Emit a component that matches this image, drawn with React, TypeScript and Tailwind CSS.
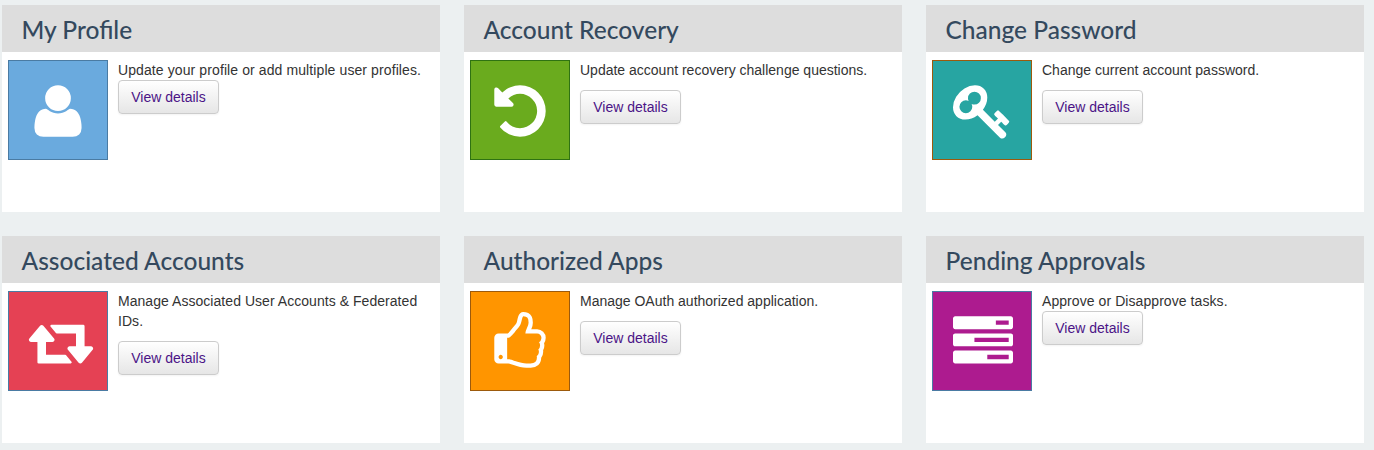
import type { ReactNode } from 'react';

type Card = {
  title: string;
  text: string;
  tracking: string;
  tile: string;
  button: string;
  shift: string;
  icon: ReactNode;
};

const cards: Card[] = [
  {
    title: 'My Profile',
    text: 'Update your profile or add multiple user profiles.',
    tracking: 'tracking-[0.1px]',
    tile: 'bg-[#6aaade] border-[#4a7ba3]',
    button: 'mt-0',
    shift: 'pl-0',
    icon: (
      <path
        transform="translate(192 1536) scale(1 -1)"
        d="M1408 131q0 -120 -73 -189.5t-194 -69.5h-874q-121 0 -194 69.5t-73 189.5q0 53 3.5 103.5t14 109t26.5 108.5t43 97.5t62 81t85.5 53.5t111.5 20q9 0 42 -21.5t74.5 -48t108 -48t133.5 -21.5t133.5 21.5t108 48t74.5 48t42 21.5q61 0 111.5 -20t85.5 -53.5t62 -81t43 -97.5t26.5 -108.5t14 -109t3.5 -103.5zM1088 1024q0 -159 -112.5 -271.5t-271.5 -112.5t-271.5 112.5t-112.5 271.5t112.5 271.5t271.5 112.5t271.5 -112.5t112.5 -271.5z"
      />
    ),
  },
  {
    title: 'Account Recovery',
    text: 'Update account recovery challenge questions.',
    tracking: 'tracking-normal',
    tile: 'bg-[#6aab1e] border-[#2f7312]',
    button: 'mt-2.5',
    shift: 'pl-0',
    icon: (
      <path d="M1664 896q0 156-61 298t-164 245-245 164-298 61q-172 0-327-72.5t-264-204.5q-7-10-6.5-22.5t8.5-20.5l137-138q10-9 25-9 16 2 23 12 73 95 179 147t225 52q104 0 198.5-40.5t163.5-109.5 109.5-163.5 40.5-198.5-40.5-198.5-109.5-163.5-163.5-109.5-198.5-40.5q-98 0-188 35.5t-160 101.5l137 138q31 30 14 69-17 40-59 40h-448q-26 0-45-19t-19-45v-448q0-42 40-59 39-17 69 14l130 129q107-101 244.5-156.5t284.5-55.5q156 0 298 61t245 164 164 245 61 298z" />
    ),
  },
  {
    title: 'Change Password',
    text: 'Change current account password.',
    tracking: 'tracking-normal',
    tile: 'bg-[#27a5a2] border-[#9c5a0c]',
    button: 'mt-2.5',
    shift: 'pl-0.5',
    icon: (
      <path d="M832 512q0-80-56-136t-136-56-136 56-56 136q0 42 19 83-41-19-83-19-80 0-136 56t-56 136 56 136 136 56 136-56 56-136q0-42-19-83 41 19 83 19 80 0 136-56t56-136zm851 704q0 17-49 66t-66 49q-9 0-28.5-16t-36.5-33-38.5-40-24.5-26l-96 96 220 220q28 28 28 68 0 42-39 81t-81 39q-40 0-68-28l-671-671q-176 131-365 131-163 0-265.5-102.5t-102.5-265.5q0-160 95-313t248-248 313-95q163 0 265.5 102.5t102.5 265.5q0 189-131 365l355 355 96-96q-3-3-26-24.5t-40-38.5-33-36.5-16-28.5q0-17 49-66t66-49q13 0 23 10 6 6 46 44.5t82 79.5 86.5 86 73 78 28.5 41z" />
    ),
  },
  {
    title: 'Associated Accounts',
    text: 'Manage Associated User Accounts & Federated IDs.',
    tracking: 'tracking-[0.045px]',
    tile: 'bg-[#e54154] border-[#4a7ba3]',
    button: 'mt-2.5',
    shift: 'pl-1.5',
    icon: (
      <path d="M1216 1504q0 13-9.5 22.5t-22.5 9.5h-960q-8 0-13.5-2t-9-7-5.5-8-3-11.5-1-11.5v-600h-192q-26 0-45-19t-19-45q0-24 15-41l320-384q19-22 49-22t49 22l320 384q15 17 15 41 0 26-19 45t-45 19h-192v384h576q16 0 25 11l160 192q7 10 7 21zm640-416q0 24-15 41l-320 384q-20 23-49 23t-49-23l-320-384q-15-17-15-41 0-26 19-45t45-19h192v-384h-576q-16 0-25-12l-160-192q-7-9-7-20 0-13 9.5-22.5t22.5-9.5h960q8 0 13.5 2t9 7 5.5 8 3 11.5 1 11.5v600h192q26 0 45 19t19 45z" />
    ),
  },
  {
    title: 'Authorized Apps',
    text: 'Manage OAuth authorized application.',
    tracking: 'tracking-normal',
    tile: 'bg-[#ff9500] border-[#9c5a0c]',
    button: 'mt-2.5',
    shift: 'pl-0',
    icon: (
      <path d="M384 1344q0-26-19-45t-45-19-45 19-19 45 19 45 45 19 45-19 19-45zm1152-576q0-51-39-89.5t-89-38.5h-352q0-58 48-159.5t48-160.5q0-98-32-145t-128-47q-26 26-38 85t-30.5 125.5-59.5 109.5q-22 23-77 91-4 5-23 30t-31.5 41-34.5 42.5-40 44-38.5 35.5-40 27-35.5 9h-32v640h32q13 0 31.5 3t33 6.5 38 11 35 11.5 35.5 12.5 29 10.5q211 73 342 73h121q192 0 192-167 0-26-5-56 30-16 47.5-52.5t17.5-73.5-18-69q53-50 53-119 0-25-10-55.5t-25-47.5q32-1 53.5-47t21.5-81zm128-1q0 89-49 163 9 33 9 69 0 77-38 144 3 21 3 43 0 101-60 178 1 139-85 219.5t-227 80.5h-129q-96 0-189.5-22.5t-216.5-65.5q-116-40-138-40h-288q-53 0-90.5-37.5t-37.5-90.5v-640q0-53 37.5-90.5t90.5-37.5h274q36-24 137-155 58-75 107-128 24-25 35.5-85.5t30.5-126.5 62-108q39-37 90-37 84 0 151 32.5t102 101.5 35 186q0 93-48 192h176q104 0 180 76t76 179z" />
    ),
  },
  {
    title: 'Pending Approvals',
    text: 'Approve or Disapprove tasks.',
    tracking: 'tracking-[0.07px]',
    tile: 'bg-[#ad1b8f] border-[#4a7ba3]',
    button: 'mt-0',
    shift: 'pl-0.5',
    icon: (
      <path d="M1024 1408h640v-128h-640v128zm-384-512h1024v-128h-1024v128zm640-512h384v-128h-384v128zm512 832v256q0 26-19 45t-45 19h-1664q-26 0-45-19t-19-45v-256q0-26 19-45t45-19h1664q26 0 45 19t19 45zm0-512v256q0 26-19 45t-45 19h-1664q-26 0-45-19t-19-45v-256q0-26 19-45t45-19h1664q26 0 45 19t19 45zm0-512v256q0 26-19 45t-45 19h-1664q-26 0-45-19t-19-45v-256q0-26 19-45t45-19h1664q26 0 45 19t19 45z" />
    ),
  },
];

function DashboardCard({ title, text, tracking, tile, button, shift, icon }: Card) {
  return (
    <section className="h-[207px] bg-white">
      <h2 className="flex h-[47px] items-center bg-[#dddddd] pt-0.5 pl-[19.5px] font-['Lato',sans-serif] text-[24.5px] leading-[43px] font-medium text-[#34495e]">
        {title}
      </h2>
      <div className="flex gap-2.5 pt-2 pl-1.5">
        <div className={`flex h-[100px] w-[100px] shrink-0 items-center justify-center border pt-px ${tile} ${shift}`}>
          <svg viewBox="0 0 1792 1792" className="h-[60px] w-[60px] shrink-0 overflow-visible fill-white">
            {icon}
          </svg>
        </div>
        <div className="w-[312px] text-sm leading-5 text-[#333333]">
          <p className={tracking}>{text}</p>
          <button
            className={`block h-[34px] w-[101px] rounded border border-[#cccccc] bg-linear-to-b from-white to-[#e6e6e6] text-center text-[#4b1487] shadow-[0_1px_2px_rgba(0,0,0,0.05)] ${button}`}
          >
            View details
          </button>
        </div>
      </div>
    </section>
  );
}

export default function App() {
  return (
    <main className="h-[450px] overflow-hidden bg-[#ecf0f1] pt-[5px] pl-0.5 font-['Liberation_Sans',Arial,sans-serif]">
      <div className="grid grid-cols-[438px_438px_438px] gap-6">
        {cards.map((card) => (
          <DashboardCard key={card.title} {...card} />
        ))}
      </div>
    </main>
  );
}
